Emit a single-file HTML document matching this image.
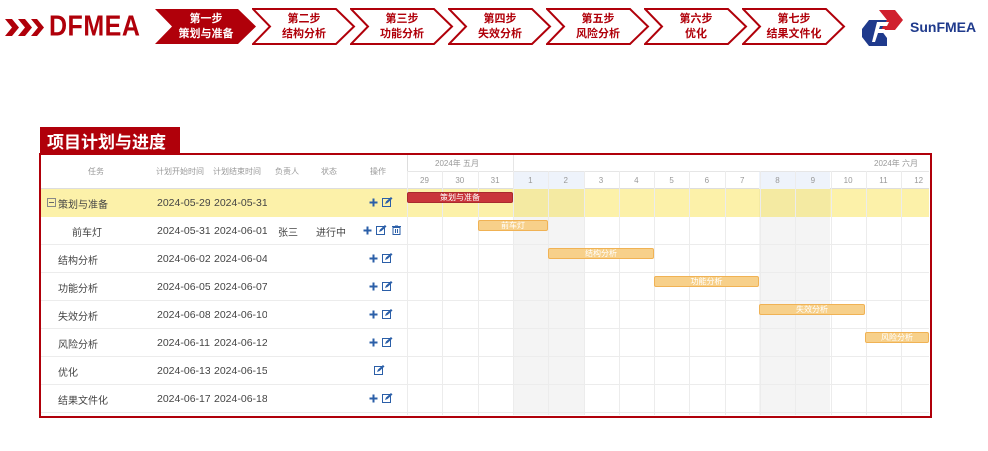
<!DOCTYPE html>
<html><head><meta charset="utf-8"><style>
*{margin:0;padding:0;box-sizing:border-box}
body{width:988px;height:451px;background:#fff;position:relative;overflow:hidden;font-family:"Liberation Sans","Noto Sans CJK SC",sans-serif}
.a{position:absolute}
.st{position:absolute;top:8px;height:37px;width:104px;text-align:center;color:#b0000a;font-size:11px;font-weight:bold;line-height:15px;padding-top:4px}
.st svg{position:absolute;left:0;top:0}
.st span{position:relative}
.lt{font-size:10px;color:#444;position:absolute;white-space:nowrap;overflow:hidden;line-height:14px;height:14px}
.lt:not(.d){transform:translateY(3px)}
.d{width:53px;font-size:10.5px}
.hd{font-size:8px;color:#999;position:absolute}
.row{position:absolute;left:41px;width:888px;height:28px;border-bottom:1px solid #ececec}
.bar{position:absolute;height:11px;border-radius:2px;font-size:8px;color:#fff;text-align:center;line-height:10px}
.ic{position:absolute;height:12px}
</style></head><body>
<svg class="a" style="left:5px;top:19px" width="40" height="18"><path d="M0 0h7l7 8.5-7 8.5H0l7-8.5z M13 0h7l7 8.5-7 8.5h-7l7-8.5z M26 0h6l7 8.5-7 8.5h-6l7-8.5z" fill="#b0000a"/></svg>
<div class="a" style="left:49px;top:10px;font-size:25px;font-weight:bold;color:#b0000a;transform:scaleY(1.15);transform-origin:0 0;letter-spacing:0.5px">DFMEA</div>

<div class="st" style="left:154px;color:#fff"><svg width="104" height="37"><path d="M1 1H84L102 18.5 84 36H1L18 18.5Z" fill="#b0000a"/></svg><span>第一步<br>策划与准备</span></div>
<div class="st" style="left:252px"><svg width="104" height="37"><path d="M1 1H84L102 18.5 84 36H1L18 18.5Z" fill="none" stroke="#b0000a" stroke-width="2"/></svg><span>第二步<br>结构分析</span></div>
<div class="st" style="left:350px"><svg width="104" height="37"><path d="M1 1H84L102 18.5 84 36H1L18 18.5Z" fill="none" stroke="#b0000a" stroke-width="2"/></svg><span>第三步<br>功能分析</span></div>
<div class="st" style="left:448px"><svg width="104" height="37"><path d="M1 1H84L102 18.5 84 36H1L18 18.5Z" fill="none" stroke="#b0000a" stroke-width="2"/></svg><span>第四步<br>失效分析</span></div>
<div class="st" style="left:546px"><svg width="104" height="37"><path d="M1 1H84L102 18.5 84 36H1L18 18.5Z" fill="none" stroke="#b0000a" stroke-width="2"/></svg><span>第五步<br>风险分析</span></div>
<div class="st" style="left:644px"><svg width="104" height="37"><path d="M1 1H84L102 18.5 84 36H1L18 18.5Z" fill="none" stroke="#b0000a" stroke-width="2"/></svg><span>第六步<br>优化</span></div>
<div class="st" style="left:742px"><svg width="104" height="37"><path d="M1 1H84L102 18.5 84 36H1L18 18.5Z" fill="none" stroke="#b0000a" stroke-width="2"/></svg><span>第七步<br>结果文件化</span></div>

<svg class="a" style="left:860px;top:9px" width="44" height="38"><path d="M19 1h16l8 10-8 10H19l8-10z" fill="#d0202e"/><path d="M9 11h18l-6 10 6 8v8H9L2 28V20z" fill="#1f3a8c"/><path d="M17 13h12l-2 4h-7l-1 3h6l-2 4h-5l-3 9h-3z" fill="#fff"/></svg>
<div class="a" style="left:910px;top:19px;font-size:14px;font-weight:bold;color:#1f3a8c">SunFMEA</div>

<div class="a" style="left:40px;top:127px;width:140px;height:27px;background:#b0000a;color:#fff;font-size:17px;font-weight:bold;padding:1px 0 0 7px">项目计划与进度</div>
<div class="a" style="left:39px;top:153px;width:893px;height:265px;border:2px solid #b0000a"></div>

<div class="a" style="left:407px;top:155px;width:1px;height:260px;background:#ddd"></div>
<div class="a" style="left:41px;top:188px;width:888px;height:1px;background:#ddd"></div>
<div class="hd" style="left:88px;top:166px">任务</div>
<div class="hd" style="left:156px;top:166px">计划开始时间</div>
<div class="hd" style="left:213px;top:166px">计划结束时间</div>
<div class="hd" style="left:275px;top:166px">负责人</div>
<div class="hd" style="left:321px;top:166px">状态</div>
<div class="hd" style="left:370px;top:166px">操作</div>

<div class="a" style="left:513px;top:171px;width:71px;height:18px;background:#eef3fb"></div>
<div class="a" style="left:759px;top:171px;width:71px;height:18px;background:#eef3fb"></div>
<div class="a" style="left:513px;top:217px;width:71px;height:198px;background:#f4f4f4"></div>
<div class="a" style="left:759px;top:217px;width:71px;height:198px;background:#f4f4f4"></div>
<div class="a" style="left:41px;top:189px;width:888px;height:28px;background:#fcf1a9"></div>
<div class="a" style="left:513px;top:189px;width:71px;height:28px;background:#f4eaa2"></div>
<div class="a" style="left:759px;top:189px;width:71px;height:28px;background:#f4eaa2"></div>
<div class="a" style="left:408px;top:171px;width:521px;height:1px;background:#e6e6e6"></div>
<div class="a" style="left:513px;top:155px;width:1px;height:16px;background:#e6e6e6"></div>
<div class="hd" style="left:435px;top:158px">2024年 五月</div>
<div class="hd" style="left:874px;top:158px">2024年 六月</div>
<div id="g"></div>

<div class="row" style="top:217px"></div>
<div class="row" style="top:245px"></div>
<div class="row" style="top:273px"></div>
<div class="row" style="top:301px"></div>
<div class="row" style="top:329px"></div>
<div class="row" style="top:357px"></div>
<div class="row" style="top:385px"></div>

<script>
var g=document.getElementById('g'),d=[29,30,31,1,2,3,4,5,6,7,8,9,10,11,12],h='';
for(var i=0;i<15;i++){var x=407+i*35.3;if(x<929)h+='<div class="a" style="left:'+x+'px;top:171px;width:1px;height:244px;background:#ececec"></div>';h+='<div class="hd" style="left:'+x+'px;width:35px;text-align:center;top:176px">'+d[i]+'</div>';}
g.innerHTML=h;
var P='<svg width="9" height="9" viewBox="0 0 9 9"><path d="M4.5 0.5v8M0.5 4.5h8" stroke="#2b5fa8" stroke-width="2"/></svg>';
var E='<svg width="11" height="10" viewBox="0 0 11 10"><rect x="0.5" y="1.5" width="8" height="8" fill="none" stroke="#2b5fa8"/><path d="M3 7l1-2.5 5-4.5 1.5 1.5-5 4.5z" fill="#2b5fa8"/></svg>';
var T='<svg width="9" height="10" viewBox="0 0 9 10"><path d="M0 1.5h9M3 0h3M1 2.5h7v7H1z M3.5 4v4M5.5 4v4" fill="none" stroke="#2b5fa8"/></svg>';
var rows=[[189,369,P+' '+E],[217,363,P+' '+E+' '+T],[245,369,P+' '+E],[273,369,P+' '+E],[301,369,P+' '+E],[329,369,P+' '+E],[357,374,E],[385,369,P+' '+E]];
rows.forEach(function(r){var e=document.createElement('div');e.className='ic';e.style.left=r[1]+'px';e.style.top=(r[0]+8)+'px';e.style.lineHeight='10px';e.innerHTML=r[2];document.body.appendChild(e);});
</script>

<div class="a" style="left:47px;top:198px;width:9px;height:9px;border:1px solid #888;"><div class="a" style="left:1px;top:3px;width:5px;height:1px;background:#666"></div></div>
<div class="lt" style="left:58px;top:196px">策划与准备</div>
<div class="lt d" style="left:157px;top:196px">2024-05-29</div><div class="lt d" style="left:214px;top:196px">2024-05-31</div>

<div class="lt" style="left:72px;top:224px">前车灯</div>
<div class="lt d" style="left:157px;top:224px">2024-05-31</div><div class="lt d" style="left:214px;top:224px">2024-06-01</div>
<div class="lt" style="left:278px;top:224px">张三</div><div class="lt" style="left:316px;top:224px">进行中</div>

<div class="lt" style="left:58px;top:252px">结构分析</div><div class="lt d" style="left:157px;top:252px">2024-06-02</div><div class="lt d" style="left:214px;top:252px">2024-06-04</div>
<div class="lt" style="left:58px;top:280px">功能分析</div><div class="lt d" style="left:157px;top:280px">2024-06-05</div><div class="lt d" style="left:214px;top:280px">2024-06-07</div>
<div class="lt" style="left:58px;top:308px">失效分析</div><div class="lt d" style="left:157px;top:308px">2024-06-08</div><div class="lt d" style="left:214px;top:308px">2024-06-10</div>
<div class="lt" style="left:58px;top:336px">风险分析</div><div class="lt d" style="left:157px;top:336px">2024-06-11</div><div class="lt d" style="left:214px;top:336px">2024-06-12</div>
<div class="lt" style="left:58px;top:364px">优化</div><div class="lt d" style="left:157px;top:364px">2024-06-13</div><div class="lt d" style="left:214px;top:364px">2024-06-15</div>
<div class="lt" style="left:58px;top:392px">结果文件化</div><div class="lt d" style="left:157px;top:392px">2024-06-17</div><div class="lt d" style="left:214px;top:392px">2024-06-18</div>

<div class="bar" style="left:407px;top:192px;width:106px;background:#c9353a;border:1px solid #a82a2e">策划与准备</div>
<div class="bar" style="left:478px;top:220px;width:70px;background:#f7d08a;border:1px solid #f0b254">前车灯</div>
<div class="bar" style="left:548px;top:248px;width:106px;background:#f7d08a;border:1px solid #f0b254">结构分析</div>
<div class="bar" style="left:654px;top:276px;width:105px;background:#f7d08a;border:1px solid #f0b254">功能分析</div>
<div class="bar" style="left:759px;top:304px;width:106px;background:#f7d08a;border:1px solid #f0b254">失效分析</div>
<div class="bar" style="left:865px;top:332px;width:64px;background:#f7d08a;border:1px solid #f0b254">风险分析</div>
</body></html>
